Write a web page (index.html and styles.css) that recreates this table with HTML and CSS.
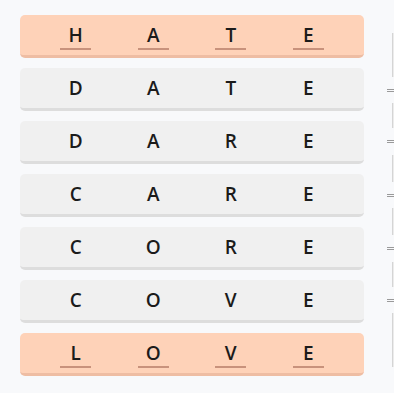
FILE: index.html
```html
<!DOCTYPE html>
<html>

<head>
    <title>Word Ladder</title>
    <link rel="stylesheet" href="styles.css">
</head>

<body>
    <div class="board">
        <div class="ladder">
            <div class="rung goal">
                <span class="cell"><span class="letter">H</span></span>
                <span class="cell"><span class="letter">A</span></span>
                <span class="cell"><span class="letter">T</span></span>
                <span class="cell"><span class="letter">E</span></span>
            </div>
            <div class="rung">
                <span class="cell"><span class="letter">D</span></span>
                <span class="cell"><span class="letter">A</span></span>
                <span class="cell"><span class="letter">T</span></span>
                <span class="cell"><span class="letter">E</span></span>
            </div>
            <div class="rung">
                <span class="cell"><span class="letter">D</span></span>
                <span class="cell"><span class="letter">A</span></span>
                <span class="cell"><span class="letter">R</span></span>
                <span class="cell"><span class="letter">E</span></span>
            </div>
            <div class="rung">
                <span class="cell"><span class="letter">C</span></span>
                <span class="cell"><span class="letter">A</span></span>
                <span class="cell"><span class="letter">R</span></span>
                <span class="cell"><span class="letter">E</span></span>
            </div>
            <div class="rung">
                <span class="cell"><span class="letter">C</span></span>
                <span class="cell"><span class="letter">O</span></span>
                <span class="cell"><span class="letter">R</span></span>
                <span class="cell"><span class="letter">E</span></span>
            </div>
            <div class="rung">
                <span class="cell"><span class="letter">C</span></span>
                <span class="cell"><span class="letter">O</span></span>
                <span class="cell"><span class="letter">V</span></span>
                <span class="cell"><span class="letter">E</span></span>
            </div>
            <div class="rung goal">
                <span class="cell"><span class="letter">L</span></span>
                <span class="cell"><span class="letter">O</span></span>
                <span class="cell"><span class="letter">V</span></span>
                <span class="cell"><span class="letter">E</span></span>
            </div>
        </div>

        <div class="steps">
            <div class="step tall"></div>
            <div class="link"></div>
            <div class="step s25"></div>
            <div class="link l27"></div>
            <div class="step s27"></div>
            <div class="link"></div>
            <div class="step s27"></div>
            <div class="link l27"></div>
            <div class="step s25"></div>
            <div class="link"></div>
            <div class="step last"></div>
        </div>
    </div>
</body>

</html>
```

FILE: styles.css
```css
body {
    margin: 0;
    background-color: #f8f9fb;
    font-family: "Open Sans", "Noto Sans", sans-serif;
}

.board {
    display: flex;
    padding: 15px 0 0 20px;
}

.ladder {
    width: 344px;
    flex-shrink: 0;
    display: flex;
    flex-direction: column;
    gap: 10px;
}

.rung {
    height: 40px;
    padding: 0 17px;
    display: grid;
    grid-template-columns: repeat(4, 1fr);
    background-color: #f0f0f0;
    border-bottom: 3px solid #dddddd;
    border-radius: 5px;
}

.rung.goal {
    background-color: #fed2b8;
    border-bottom-color: #eebda3;
}

.cell {
    display: flex;
    align-items: center;
    justify-content: center;
}

.letter {
    width: 31px;
    padding-top: 2px;
    text-align: center;
    font-size: 19px;
    font-weight: 600;
    line-height: 25px;
    color: #1b1b1b;
    border-bottom: 2px solid transparent;
}

.goal .letter {
    border-bottom-color: #c8927c;
}

/* next column, only its edge fits on screen */
.steps {
    margin-left: 23px;
    padding-top: 18px;
    width: 7px;
    flex-shrink: 0;
    display: flex;
    flex-direction: column;
}

.step {
    margin-left: 5px;
    height: 25px;
    background-color: #ececec;
    border-left: 1px solid #d5d5d5;
}

.step.tall {
    height: 44px;
}

.step.s27 {
    height: 27px;
}

.step.last {
    height: 54px;
}

.link {
    height: 26px;
    display: flex;
    align-items: center;
}

.link.l27 {
    height: 27px;
}

.link::before {
    content: "";
    width: 7px;
    height: 1px;
    border-top: 1px solid #9a9a9a;
    border-bottom: 1px solid #9a9a9a;
}
```
